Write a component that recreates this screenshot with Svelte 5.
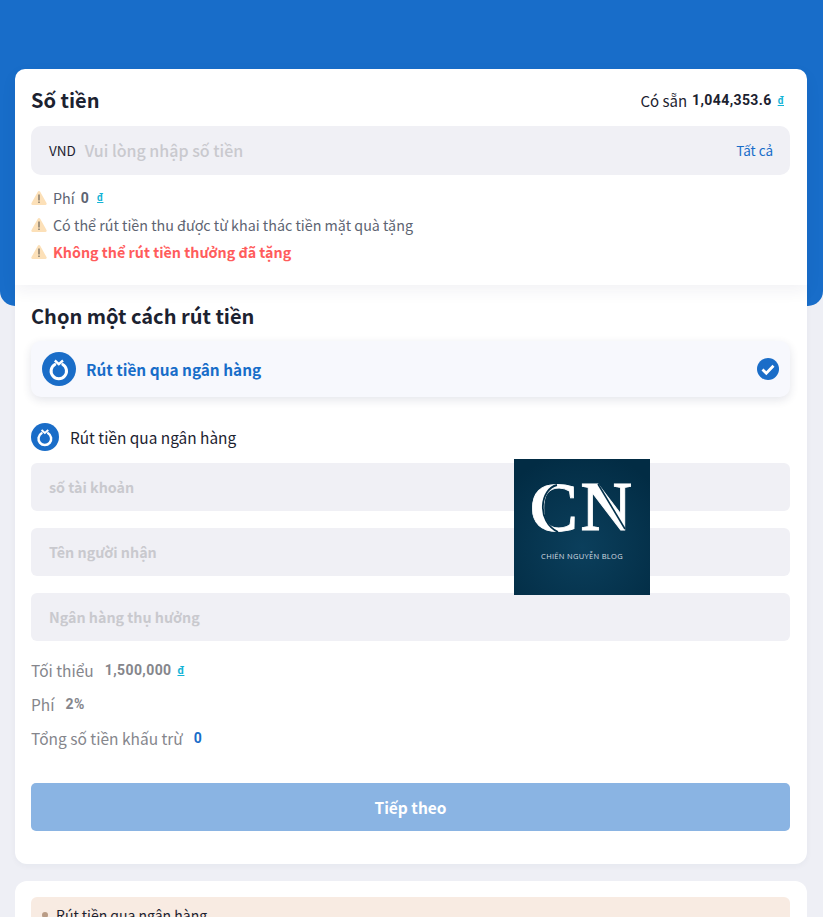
<script>
	const warnings = [
		{ text: "Có thể rút tiền thu được từ khai thác tiền mặt quà tặng" },
		{ text: "Không thể rút tiền thưởng đã tặng", danger: true }
	];
	const fields = ["số tài khoản", "Tên người nhận", "Ngân hàng thụ hưởng"];
</script>

{#snippet warn()}
	<svg class="warn" viewBox="0 0 16 16" width="16" height="16">
		<path d="M8 1c.5 0 .9.3 1.200.8l6.300 11.300c.5.9 0 1.900-1 1.900H1.500c-1 0-1.500-1-1-1.900l6.300-11.300c.3-.5.700-.8 1.200-.8z" fill="#fce0b8" />
		<rect x="7.400" y="4.500" width="1.200" height="6" fill="#6a6358" />
		<rect x="7.400" y="11.500" width="1.200" height="1.500" fill="#6a6358" />
	</svg>
{/snippet}

{#snippet bank(size)}
	<svg viewBox="0 0 34 34" width={size} height={size} class="bank">
		<circle cx="17" cy="17" r="17" fill="#1a6dc8" />
		<path d="M12.800 12.500a7.700 7.700 0 1 0 8 0" fill="none" stroke="#fff" stroke-width="3" stroke-linecap="round" />
		<path d="M12.800 8.500l4 3.600 4.200-3.600" fill="none" stroke="#fff" stroke-width="2.400" />
	</svg>
{/snippet}

<div class="page">
	<div class="hero"></div>
	<main>
		<section class="card amount">
			<div class="head">
				<h2>Số tiền</h2>
				<div class="avail">Có sẵn <b>1,044,353.6</b> <span class="cur">đ</span></div>
			</div>
			<div class="input">
				<span class="vnd">VND</span>
				<span class="ph">Vui lòng nhập số tiền</span>
				<span class="all">Tất cả</span>
			</div>
			<ul class="notes">
				<li>{@render warn()}Phí <b class="num">0</b> <span class="cur small">đ</span></li>
				{#each warnings as w}
					<li class:danger={w.danger}>{@render warn()}{w.text}</li>
				{/each}
			</ul>
		</section>

		<section class="card method">
			<h2>Chọn một cách rút tiền</h2>
			<div class="option">
				{@render bank(34)}
				<span class="opt-label">Rút tiền qua ngân hàng</span>
				<svg class="tick" viewBox="0 0 22 22" width="22" height="22">
					<circle cx="11" cy="11" r="11" fill="#1a6dc8" />
					<path d="M5.500 11.500l3.800 3.700 7.200-7.400" fill="none" stroke="#fff" stroke-width="2.800" />
				</svg>
			</div>
			<div class="bank-title">
				{@render bank(28)}
				<span>Rút tiền qua ngân hàng</span>
			</div>
			<div class="fields">
				{#each fields as f}
					<div class="field">{f}</div>
				{/each}
			</div>
			<div class="stats">
				<div>Tối thiểu <b>1,500,000</b> <span class="cur">đ</span></div>
				<div>Phí <b>2%</b></div>
				<div>Tổng số tiền khấu trừ <b class="blue">0</b></div>
			</div>
			<button>Tiếp theo</button>
		</section>

		<section class="card tips">
			<div class="tip"><i></i>Rút tiền qua ngân hàng</div>
		</section>
	</main>

	<div class="logo">
		<svg viewBox="0 0 136 136" width="136" height="136">
			<defs>
				<radialGradient id="bg" cx="50%" cy="65%" r="70%">
					<stop offset="0" stop-color="#0b3f5c" />
					<stop offset="1" stop-color="#022c44" />
				</radialGradient>
			</defs>
			<rect width="136" height="136" fill="url(#bg)" />
			<text x="15" y="72" class="big">C</text>
			<text x="67" y="71" class="big">N</text>
			<!-- cuts through the letters, like the logo's crescent and split diagonal -->
			<path d="M43 26C26 30 22 62 44 73" fill="none" stroke="#03304a" stroke-width="1.800" />
			<path d="M84 25l27 45" fill="none" stroke="#03304a" stroke-width="1.600" />
			<text x="68" y="100" class="tag" text-anchor="middle">CHIẾN NGUYỄN BLOG</text>
		</svg>
	</div>
</div>

<style>
	:global(body) {
		background: #eeeff5;
	}
	.page {
		position: relative;
		height: 917px;
		overflow: hidden;
		font-family: "Noto Sans CJK SC", "Noto Sans", sans-serif;
		color: #1c2230;
	}
	.hero {
		height: 306px;
		background: #186dc9;
		border-radius: 0 0 15px 15px;
	}
	main {
		position: relative;
		margin: -237px 16px 0 15px;
	}
	.card {
		background: #fff;
		padding: 16px 17px 16px 16px;
	}
	h2 {
		margin: 0;
		font-size: 20px;
		line-height: 30px;
		font-weight: 600;
	}
	.amount {
		height: 216px;
		box-sizing: border-box;
		border-radius: 10px 10px 0 0;
		box-shadow: 0 6px 16px rgba(30, 40, 80, 0.06);
		position: relative;
		z-index: 1;
	}
	.head {
		display: flex;
		justify-content: space-between;
		align-items: center;
		padding-right: 6px;
	}
	.avail {
		font-size: 15px;
		display: flex;
		align-items: center;
		gap: 5px;
	}
	b {
		font-family: Roboto, sans-serif;
		font-weight: 700;
		font-size: 14px;
		letter-spacing: 0.4px;
	}
	.cur {
		font-family: Roboto, sans-serif;
		font-weight: 700;
		font-size: 10px;
		color: #12b3d6;
		text-decoration: underline;
		margin-left: 1px;
	}
	.input {
		display: flex;
		align-items: center;
		height: 49px;
		margin-top: 11px;
		padding: 0 17px 2px 18px;
		box-sizing: border-box;
		background: #f0f0f5;
		border-radius: 10px;
	}
	.vnd {
		font-size: 13.500px;
	}
	.ph {
		margin-left: 9px;
		font-size: 16px;
		font-weight: 500;
		color: #c9c9ce;
	}
	.all {
		margin-left: auto;
		font-size: 13.500px;
		color: #186dc9;
	}
	.notes {
		list-style: none;
		margin: 9px 0 0;
		padding: 0;
		font-size: 14.300px;
		color: #5d6472;
	}
	.notes li {
		height: 27px;
		display: flex;
		align-items: center;
		gap: 6px;
	}
	.notes .num {
		color: #5d6472;
	}
	.notes .small {
		margin-left: 2px;
	}
	.warn {
		flex: none;
	}
	.danger {
		color: #ff5c5c;
		font-weight: 700;
	}
	.method {
		height: 579px;
		box-sizing: border-box;
		padding-top: 16px;
		border-radius: 0 0 12px 12px;
		box-shadow: 0 2px 6px rgba(30, 40, 80, 0.04);
	}
	.option {
		display: flex;
		align-items: center;
		height: 56px;
		margin-top: 10px;
		padding: 0 11px;
		background: #f7f8fd;
		border-radius: 10px;
		box-shadow: 0 3px 10px rgba(30, 40, 80, 0.12);
	}
	.opt-label {
		margin-left: 10px;
		font-size: 15.400px;
		font-weight: 600;
		color: #186dc9;
	}
	.tick {
		margin-left: auto;
	}
	.bank-title {
		display: flex;
		align-items: center;
		gap: 11px;
		margin-top: 26px;
		font-size: 15.400px;
	}
	.fields {
		display: flex;
		flex-direction: column;
		gap: 17px;
		margin-top: 12px;
	}
	.field {
		height: 48px;
		line-height: 48px;
		padding: 0 18px;
		background: #f0f0f5;
		border-radius: 6px;
		font-size: 14.300px;
		font-weight: 700;
		color: #c9c9ce;
	}
	.stats {
		display: flex;
		flex-direction: column;
		margin-top: 12px;
		font-size: 15.500px;
		color: #85868c;
	}
	.stats div {
		height: 34px;
		display: flex;
		align-items: center;
		gap: 11px;
	}
	.stats .cur {
		margin-left: -5px;
		font-size: 11px;
	}
	.blue {
		color: #186dc9;
	}
	button {
		display: block;
		width: 100%;
		height: 48px;
		margin-top: 28px;
		border: 0;
		border-radius: 5px;
		background: #8ab4e3;
		color: #fff;
		font: 700 15.500px "Noto Sans CJK SC", sans-serif;
	}
	.tips {
		margin-top: 17px;
		border-radius: 12px;
	}
	.tip {
		background: #f8ebe2;
		border-radius: 6px;
		padding: 8px 10px;
		min-height: 80px;
		font-size: 14px;
		color: #1c2230;
		display: flex;
		align-items: flex-start;
		gap: 8px;
		line-height: 20px;
	}
	.tip i {
		width: 6px;
		height: 6px;
		margin: 7px 0 0 1px;
		border-radius: 50%;
		background: #b99c86;
	}
	.logo {
		position: absolute;
		left: 514px;
		top: 459px;
		width: 136px;
		height: 136px;
	}
	.logo svg {
		display: block;
	}
	.big {
		font-family: "Liberation Serif", serif;
		font-size: 70px;
		font-weight: 700;
		fill: #fff;
		stroke: #fff;
		stroke-width: 0.8px;
	}
	.tag {
		font-family: "Open Sans", sans-serif;
		font-size: 7.500px;
		letter-spacing: 0.3px;
		fill: #d5dde2;
	}
</style>
